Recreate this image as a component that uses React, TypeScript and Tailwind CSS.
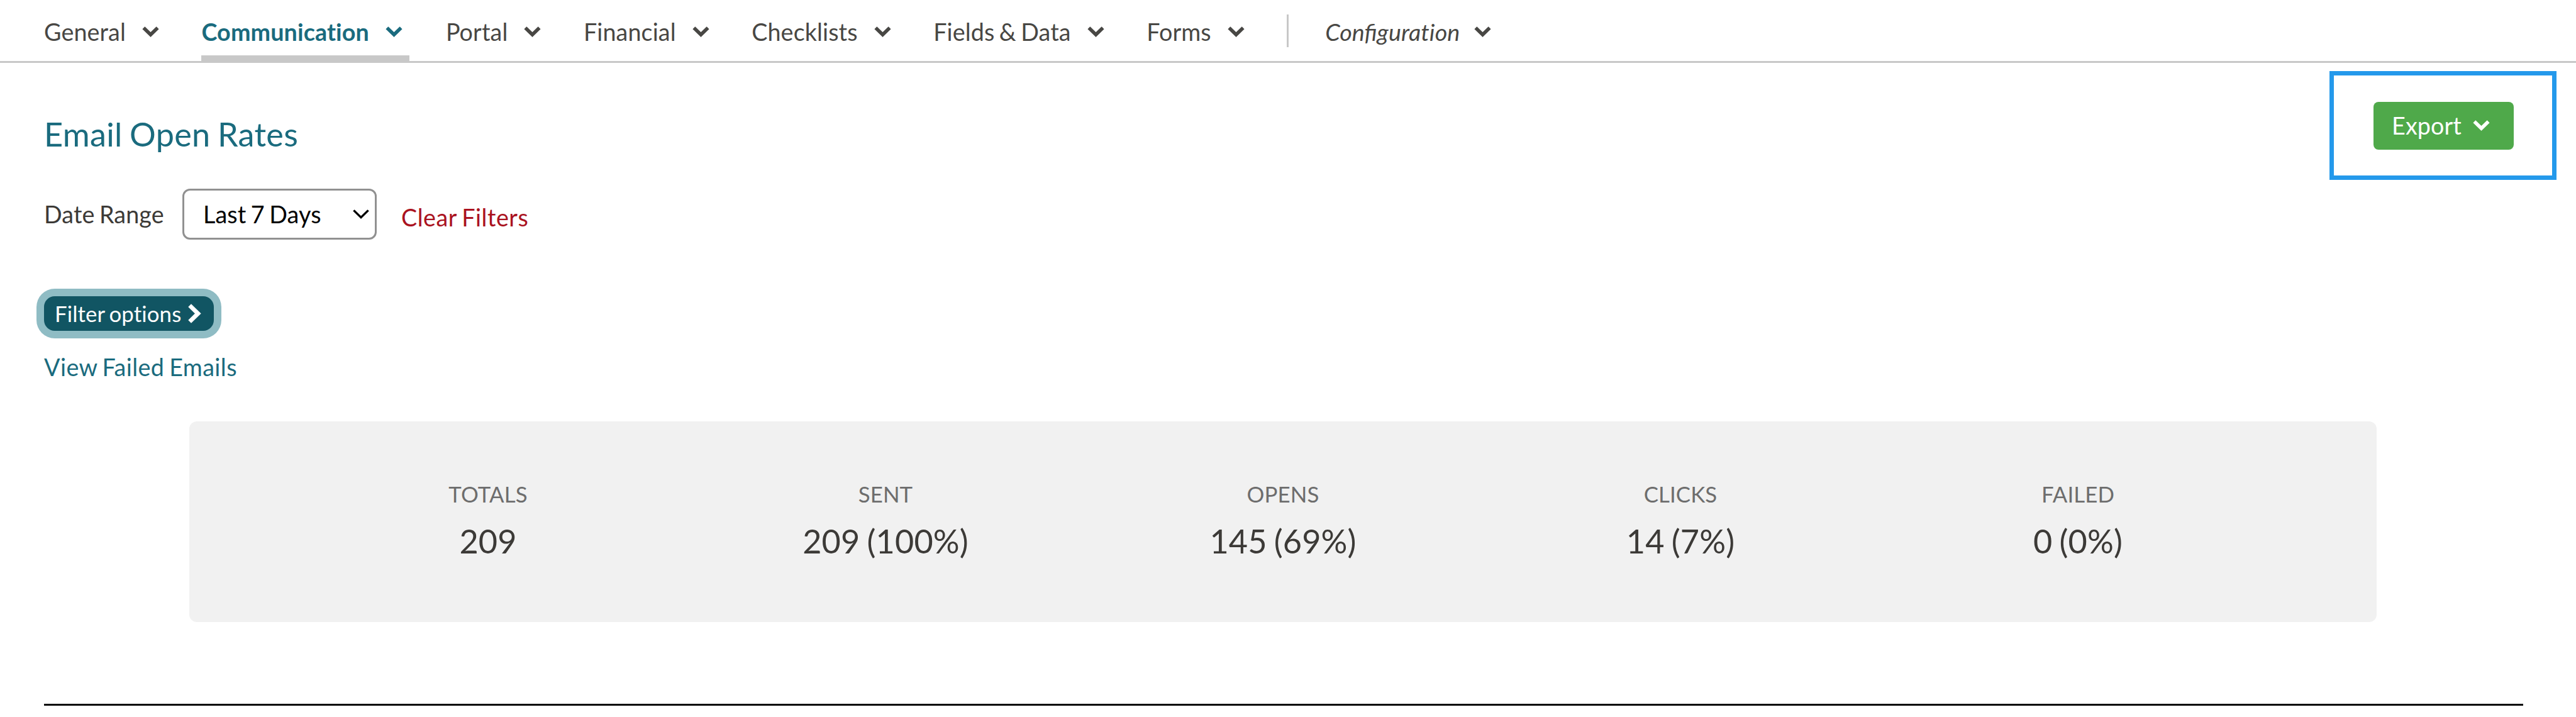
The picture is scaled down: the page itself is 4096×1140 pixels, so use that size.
import React from 'react';

const navItems = [
  { name: 'General' },
  { name: 'Communication', active: true },
  { name: 'Portal' },
  { name: 'Financial' },
  { name: 'Checklists' },
  { name: 'Fields & Data' },
  { name: 'Forms' },
];

const stats = [
  { label: 'TOTALS', value: '209' },
  { label: 'SENT', value: '209 (100%)' },
  { label: 'OPENS', value: '145 (69%)' },
  { label: 'CLICKS', value: '14 (7%)' },
  { label: 'FAILED', value: '0 (0%)' },
];

const ChevronDown: React.FC<{ className?: string }> = ({ className = '' }) => (
  <svg
    className={`h-[17px] w-[27px] shrink-0 ${className}`}
    viewBox="0 0 37 23.5"
    fill="none"
    stroke="currentColor"
    strokeWidth="7.8"
  >
    <path d="M3.1 3.2 L18.5 18 L33.9 3.2" />
  </svg>
);

const App: React.FC = () => {
  return (
    <div className="h-[1140px] w-[4096px] overflow-hidden bg-white font-['Lato',sans-serif] text-[37.7px] leading-[54px] tracking-[0.003em] text-[#484744] [font-variant-ligatures:none] [word-spacing:-0.06em]">
      <nav className="flex h-[100px] items-stretch gap-[58px] border-b-[3px] border-[#c8c8c8] pl-[70px]">
        {navItems.map((item) => (
          <a
            key={item.name}
            className={`flex border-b-[9px] pt-[24px] ${item.active ? 'border-[#c8c8c8] pr-[11px] font-bold text-[#1a6b7e]' : 'border-transparent pr-[9.5px]'}`}
          >
            {item.name}
            <ChevronDown className="mt-[18px] ml-[26px]" />
          </a>
        ))}
        <div className="mt-[23px] h-[52px] w-[3px] bg-[#c8c8c8]" />
        <a className="flex pt-[24px] italic">
          <span>
            <span className="tracking-normal [font-variant-ligatures:normal]">Confi</span>guration
          </span>
          <ChevronDown className="mt-[18px] ml-[23px]" />
        </a>
      </nav>

      <div className="flex items-start justify-between">
        <div className="pl-[70px]">
          <h1 className="mt-[77px] text-[52.2px] leading-[72px] tracking-[0.006em] text-[#1a6b7e]">Email Open Rates</h1>
          <div className="mt-[51px] flex h-[81px] items-start">
            <label className="mt-[14px] w-[193px] whitespace-nowrap text-[#3c3a37]">Date Range</label>
            <button className="ml-[27px] flex h-[81px] w-[309px] items-center justify-between rounded-[12px] border-[3px] border-[#919191] pr-[9px] pl-[30px] text-black [word-spacing:-0.06em]">
              Last 7 Days
              <svg className="h-[15px] w-[26px]" viewBox="0 0 26 15" fill="none" stroke="currentColor" strokeWidth="3.4">
                <path d="M1.4 1.4 L13 12.6 L24.6 1.4" />
              </svg>
            </button>
            <a className="mt-[19px] ml-[39px] tracking-[0.014em] text-[#aa1220]">Clear Filters</a>
          </div>
        </div>
        <div className="mt-[13px] mr-[31px] flex h-[173px] w-[361px] items-start justify-center border-[7px] border-[#2499eb] pt-[42px] pl-[2px]">
          <button className="flex h-[76px] w-[223px] rounded-[8px] bg-[#4fa94a] pt-[11px] pl-[29px] text-white">
            Export
            <ChevronDown className="mt-[18px] ml-[18px]" />
          </button>
        </div>
      </div>

      <div className="flex flex-col items-start pl-[70px]">
        <button className="mt-[90px] flex h-[55px] w-[270px] items-center justify-between rounded-[17px] bg-[#115563] pr-[20px] pl-[17px] text-[34.8px] text-white ring-[12px] ring-[#8fbcc4] [word-spacing:-0.06em]">
          Filter options
          <svg className="h-[31px] w-[21px]" viewBox="0 0 21 31" fill="none" stroke="currentColor" strokeWidth="6.8">
            <path d="M2.6 2.6 L15.8 15.5 L2.6 28.4" />
          </svg>
        </button>
        <a className="mt-[31px] tracking-[0.011em] text-[#1a6b7e]">View Failed Emails</a>
      </div>

      <section className="mt-[59px] ml-[301px] grid h-[319px] w-[3478px] grid-cols-5 rounded-[12px] bg-[#f1f1f1] px-[159px] pt-[91px] text-center">
        {stats.map((stat) => (
          <div key={stat.label}>
            <div className="text-[34.8px] leading-[50px] text-[#6d6d6d]">{stat.label}</div>
            <div className="mt-[13px] text-[52.2px] leading-[72px] text-[#3c3a37]">{stat.value}</div>
          </div>
        ))}
      </section>

      <hr className="mt-[130px] mr-[84px] ml-[70px] border-t-[3px] border-black" />
    </div>
  );
};

export default App;
